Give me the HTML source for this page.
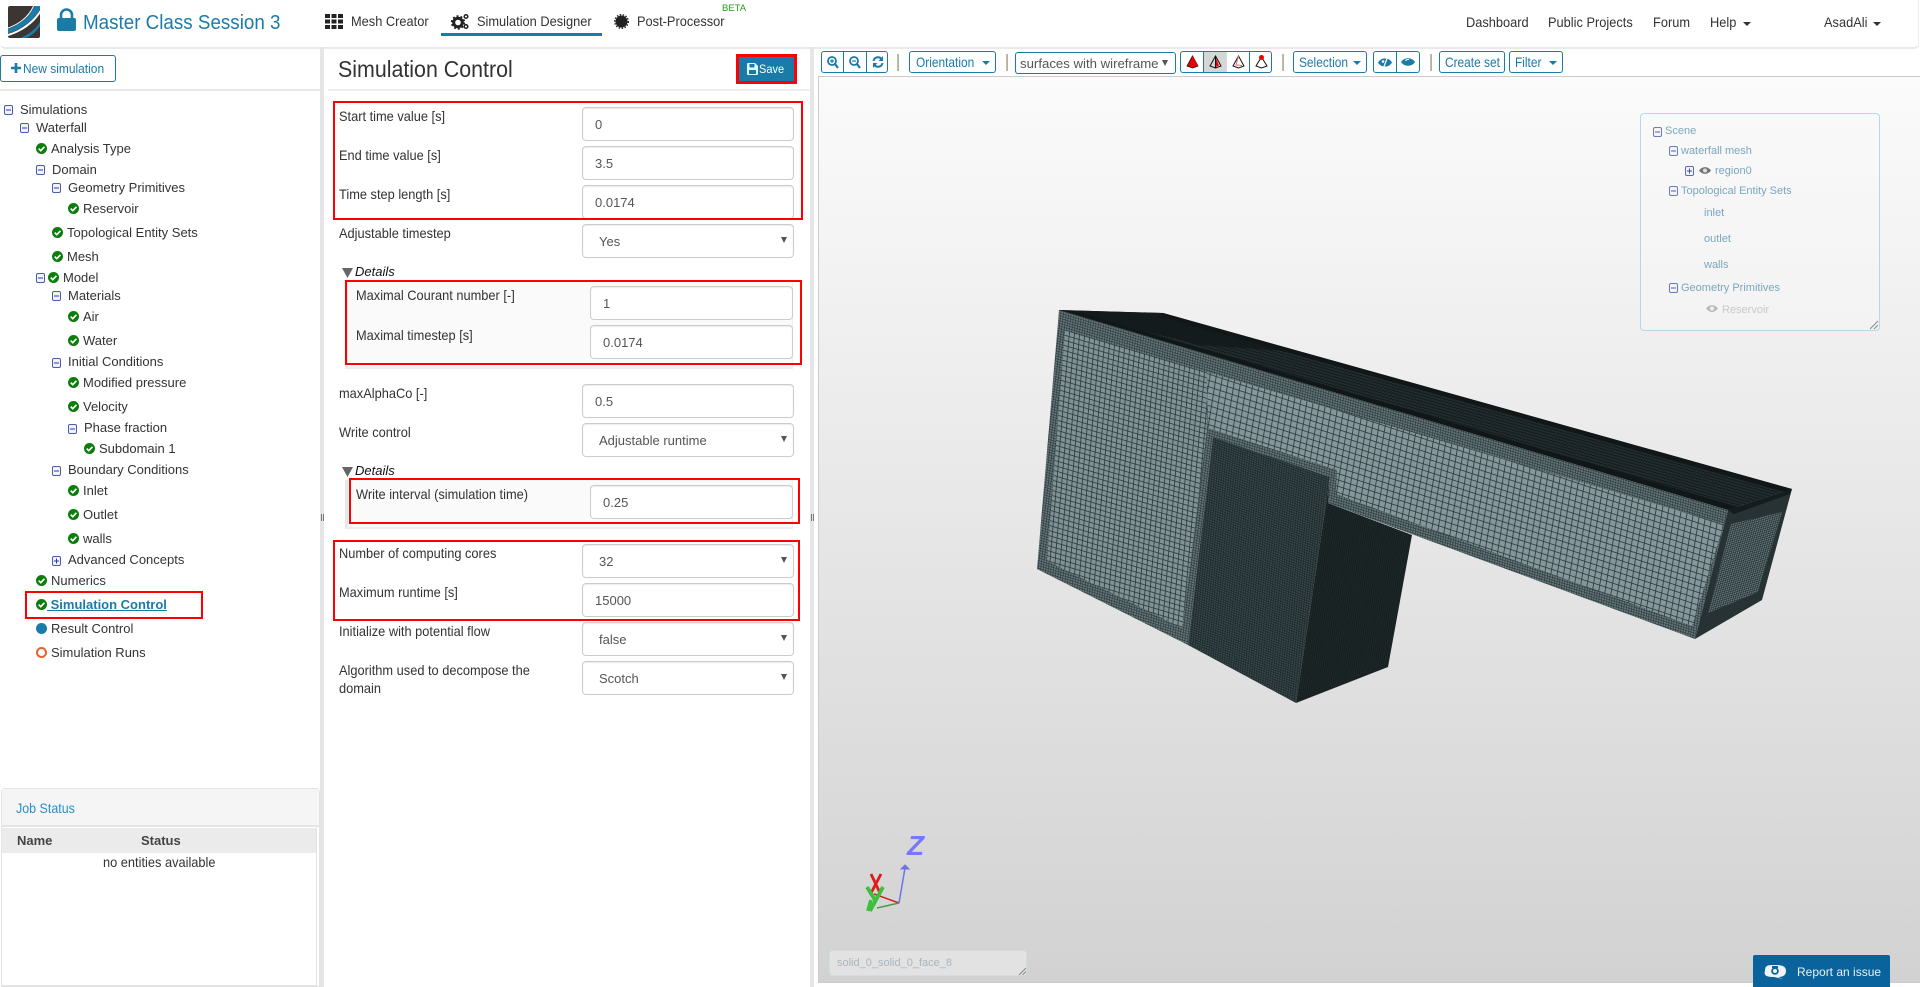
<!DOCTYPE html>
<html><head><meta charset="utf-8"><title>Simulation Control</title>
<style>
html,body{margin:0;padding:0;background:#fff}
body{position:relative;width:1920px;height:987px;overflow:hidden;font-family:"Liberation Sans",sans-serif;color:#333}
.t,.l,.i,.x,.b,.r,.s{position:absolute}
.t{white-space:nowrap;font-size:13px;line-height:16px}
.l{white-space:nowrap;font-size:14px;line-height:16px;transform:scaleX(.915);transform-origin:0 50%}
.i{overflow:visible}
.x{box-sizing:border-box;height:34px;left:582px;width:212px;border:1px solid #ccc;border-radius:4px;background:#fff;box-shadow:inset 0 1px 1px rgba(0,0,0,.075);color:#555;font-size:13px;line-height:33px;padding-left:12px}
.x.d{left:590px;width:203px}
.x.g{padding-left:16px}
.x.g:after{content:"";position:absolute;right:6px;top:12px;width:0;height:0;border-left:3px solid transparent;border-right:3px solid transparent;border-top:6px solid #555}
.r{box-sizing:border-box;border:2px solid #f00;z-index:5}
.b{box-sizing:border-box;height:22px;top:51px;border:1px solid #1a7ba8;border-radius:3px;background:#fff;color:#1a7ba8}
.b .l{top:2px;font-size:14px;transform:scaleX(.85)}
.s{width:2px;height:17px;top:54px;background:linear-gradient(90deg,#dcb68a 50%,#9db6c6 50%)}
.dv{position:absolute;top:0;bottom:0;width:1px;background:#1a7ba8}
.car{position:absolute;width:0;height:0;border-left:4px solid transparent;border-right:4px solid transparent;border-top:4px solid #1a7ba8}
.sc{font-size:11px;color:#7ba6bd}
</style></head><body>
<svg width="0" height="0" style="position:absolute"><defs>
<symbol id="c" viewBox="0 0 11 11"><circle cx="5.5" cy="5.5" r="5.5" fill="#0a7d0a"/><path d="M2.7 5.6 4.8 7.7 8.4 3.8" stroke="#fff" stroke-width="1.7" fill="none"/></symbol>
<symbol id="m" viewBox="0 0 9 10"><rect x=".5" y=".5" width="8" height="9" rx="1.5" fill="#f3f4fb" stroke="#4a5cb0"/><path d="M2 5H7" stroke="#2a3aa8" stroke-width="1"/></symbol>
<symbol id="p" viewBox="0 0 9 10"><rect x=".5" y=".5" width="8" height="9" rx="1.5" fill="#f3f4fb" stroke="#4a5cb0"/><path d="M2 5H7M4.5 2.5V7.5" stroke="#2a3aa8" stroke-width="1"/></symbol>
</defs></svg>

<!-- header -->
<div style="position:absolute;left:0;top:0;width:1918px;height:47px;border-bottom:2px solid #e9e9e9;border-right:1px solid #eee;border-radius:0 0 5px 5px;box-sizing:content-box"></div>
<svg class="i" style="left:8px;top:6px" width="32" height="32" viewBox="0 0 32 32"><rect width="32" height="32" rx="2" fill="#3b3632"/><path d="M0 21.500C12 17.500 21 9 25 0H26C22 10 12 18.500 0 22.500Z" fill="#fff"/><path d="M0 23C12 19 22 10 26.500 0H32V3C26 14 14 23 0 27.500Z" fill="#1b7cab"/><path d="M0 28C14 24 26 14 32 4V7.500C26 17 14 26 0 30Z" fill="#fff"/><path d="M12 32C20 29 27 24 32 16V20C28 26 23 30 18 32Z" fill="#1b7cab"/></svg>
<svg class="i" style="left:57px;top:9px" width="19" height="22" viewBox="0 0 19 22"><path d="M4 10V6a5.500 5.500 0 0 1 11 0V10" fill="none" stroke="#1a7ba8" stroke-width="2.600"/><rect y="9" width="19" height="13" rx="2" fill="#1a7ba8"/></svg>
<div class="l" style="left:83px;top:14px;font-size:20px;color:#1a7ba8;line-height:18px;transform:scaleX(.94)">Master Class Session 3</div>

<svg class="i" style="left:325px;top:14px" width="18" height="15" viewBox="0 0 18 15" fill="#222"><path d="M0 0h5v4H0zM6.500 0h5v4h-5zM13 0h5v4h-5zM0 5.500h5v4H0zM6.500 5.500h5v4h-5zM13 5.500h5v4h-5zM0 11h5v4H0zM6.500 11h5v4h-5zM13 11h5v4h-5z"/></svg>
<div class="l" style="left:351px;top:13px">Mesh Creator</div>
<svg class="i" style="left:451px;top:13px" width="19" height="17" viewBox="0 0 19 17"><circle cx="7" cy="9.500" r="4.300" fill="none" stroke="#222" stroke-width="3"/><circle cx="7" cy="9.500" r="6.300" fill="none" stroke="#222" stroke-width="1.800" stroke-dasharray="2 2"/><circle cx="15" cy="3.500" r="1.800" fill="none" stroke="#222" stroke-width="1.500"/><circle cx="15" cy="13.500" r="1.800" fill="none" stroke="#222" stroke-width="1.500"/></svg>
<div class="l" style="left:477px;top:13px">Simulation Designer</div>
<div style="position:absolute;left:441px;top:33px;width:161px;height:3px;background:#1a7ba8"></div>
<svg class="i" style="left:614px;top:14px" width="15" height="15" viewBox="0 0 15 15"><circle cx="7.500" cy="7.500" r="6" fill="#222"/><circle cx="7.500" cy="7.500" r="6.800" fill="none" stroke="#222" stroke-width="1.400" stroke-dasharray="1.500 1.500"/></svg>
<div class="l" style="left:637px;top:13px">Post-Processor</div>
<div class="t" style="left:722px;top:1px;font-size:9.500px;color:#2a9a1a">BETA</div>

<div class="l" style="left:1466px;top:14px">Dashboard</div>
<div class="l" style="left:1548px;top:14px">Public Projects</div>
<div class="l" style="left:1653px;top:14px">Forum</div>
<div class="l" style="left:1710px;top:14px">Help</div>
<div class="car" style="left:1743px;top:22px;border-top-color:#333"></div>
<div class="l" style="left:1824px;top:14px">AsadAli</div>
<div class="car" style="left:1873px;top:22px;border-top-color:#333"></div>

<!-- dividers -->
<div style="position:absolute;left:320px;top:47px;width:4px;height:940px;background:#e5e5e5"></div>
<div style="position:absolute;left:810px;top:47px;width:4px;height:940px;background:#e5e5e5"></div>
<div style="position:absolute;left:321px;top:514px;width:3px;height:7px;border-left:1px solid #777;border-right:1px solid #777;box-sizing:border-box"></div>
<div style="position:absolute;left:811px;top:514px;width:3px;height:7px;border-left:1px solid #777;border-right:1px solid #777;box-sizing:border-box"></div>

<!-- left panel -->
<div style="position:absolute;left:0;top:55px;width:116px;height:27px;box-sizing:border-box;border:1px solid #1a7ba8;border-radius:3px"></div>
<svg class="i" style="left:11px;top:63px" width="10" height="10" viewBox="0 0 10 10"><path d="M5 0V10M0 5H10" stroke="#1a7ba8" stroke-width="2.600"/></svg>
<div class="l" style="left:23px;top:61px;font-size:13px;color:#1a7ba8;transform:scaleX(.92)">New simulation</div>
<div style="position:absolute;left:0;top:89px;width:320px;height:2px;background:#e8e8e8"></div>

<svg class="i" style="left:4px;top:105px" width="9" height="10"><use href="#m"/></svg><div class="t" style="left:20px;top:102px">Simulations</div>
<svg class="i" style="left:20px;top:123px" width="9" height="10"><use href="#m"/></svg><div class="t" style="left:36px;top:120px">Waterfall</div>
<svg class="i" style="left:36px;top:143px" width="11" height="11"><use href="#c"/></svg><div class="t" style="left:51px;top:141px">Analysis Type</div>
<svg class="i" style="left:36px;top:165px" width="9" height="10"><use href="#m"/></svg><div class="t" style="left:52px;top:162px">Domain</div>
<svg class="i" style="left:52px;top:183px" width="9" height="10"><use href="#m"/></svg><div class="t" style="left:68px;top:180px">Geometry Primitives</div>
<svg class="i" style="left:68px;top:203px" width="11" height="11"><use href="#c"/></svg><div class="t" style="left:83px;top:201px">Reservoir</div>
<svg class="i" style="left:52px;top:227px" width="11" height="11"><use href="#c"/></svg><div class="t" style="left:67px;top:225px">Topological Entity Sets</div>
<svg class="i" style="left:52px;top:251px" width="11" height="11"><use href="#c"/></svg><div class="t" style="left:67px;top:249px">Mesh</div>
<svg class="i" style="left:36px;top:273px" width="9" height="10"><use href="#m"/></svg><svg class="i" style="left:48px;top:272px" width="11" height="11"><use href="#c"/></svg><div class="t" style="left:63px;top:270px">Model</div>
<svg class="i" style="left:52px;top:291px" width="9" height="10"><use href="#m"/></svg><div class="t" style="left:68px;top:288px">Materials</div>
<svg class="i" style="left:68px;top:311px" width="11" height="11"><use href="#c"/></svg><div class="t" style="left:83px;top:309px">Air</div>
<svg class="i" style="left:68px;top:335px" width="11" height="11"><use href="#c"/></svg><div class="t" style="left:83px;top:333px">Water</div>
<svg class="i" style="left:52px;top:358px" width="9" height="10"><use href="#m"/></svg><div class="t" style="left:68px;top:354px">Initial Conditions</div>
<svg class="i" style="left:68px;top:377px" width="11" height="11"><use href="#c"/></svg><div class="t" style="left:83px;top:375px">Modified pressure</div>
<svg class="i" style="left:68px;top:401px" width="11" height="11"><use href="#c"/></svg><div class="t" style="left:83px;top:399px">Velocity</div>
<svg class="i" style="left:68px;top:424px" width="9" height="10"><use href="#m"/></svg><div class="t" style="left:84px;top:420px">Phase fraction</div>
<svg class="i" style="left:84px;top:443px" width="11" height="11"><use href="#c"/></svg><div class="t" style="left:99px;top:441px">Subdomain 1</div>
<svg class="i" style="left:52px;top:466px" width="9" height="10"><use href="#m"/></svg><div class="t" style="left:68px;top:462px">Boundary Conditions</div>
<svg class="i" style="left:68px;top:485px" width="11" height="11"><use href="#c"/></svg><div class="t" style="left:83px;top:483px">Inlet</div>
<svg class="i" style="left:68px;top:509px" width="11" height="11"><use href="#c"/></svg><div class="t" style="left:83px;top:507px">Outlet</div>
<svg class="i" style="left:68px;top:533px" width="11" height="11"><use href="#c"/></svg><div class="t" style="left:83px;top:531px">walls</div>
<svg class="i" style="left:52px;top:556px" width="9" height="10"><use href="#p"/></svg><div class="t" style="left:68px;top:552px">Advanced Concepts</div>
<svg class="i" style="left:36px;top:575px" width="11" height="11"><use href="#c"/></svg><div class="t" style="left:51px;top:573px">Numerics</div>
<svg class="i" style="left:36px;top:599px" width="11" height="11"><use href="#c"/></svg><div class="t" style="left:47px;top:597px;color:#1a7ba8;font-weight:bold;text-decoration:underline;white-space:pre"> Simulation Control</div>
<div class="r" style="left:25px;top:591px;width:178px;height:28px"></div>
<svg class="i" style="left:36px;top:623px" width="11" height="11"><circle cx="5.500" cy="5.500" r="5.500" fill="#1a7ba8"/></svg><div class="t" style="left:51px;top:621px">Result Control</div>
<svg class="i" style="left:36px;top:647px" width="11" height="11"><circle cx="5.500" cy="5.500" r="4.500" fill="#fff" stroke="#e8632a" stroke-width="2"/></svg><div class="t" style="left:51px;top:645px">Simulation Runs</div>

<!-- job status -->
<div style="position:absolute;left:1px;top:788px;width:319px;height:199px;box-sizing:border-box;border:1px solid #e3e3e3;border-radius:4px 4px 0 0;background:#fff"></div>
<div style="position:absolute;left:2px;top:789px;width:317px;height:38px;background:#f5f5f5;border-bottom:2px solid #e5e5e5;box-sizing:border-box"></div>
<div class="l" style="left:16px;top:800px;color:#2a8fc7;transform:scaleX(.89)">Job Status</div>
<div style="position:absolute;left:2px;top:828px;width:315px;height:25px;background:#ebebeb"></div>
<div style="position:absolute;left:316px;top:827px;width:1px;height:158px;background:#e3e3e3"></div>
<div style="position:absolute;left:2px;top:985px;width:315px;height:2px;background:#e3e3e3"></div>
<div class="t" style="left:17px;top:833px;font-weight:bold;color:#444">Name</div>
<div class="t" style="left:141px;top:833px;font-weight:bold;color:#444">Status</div>
<div class="l" style="left:103px;top:854px">no entities available</div>

<!-- form -->
<div class="l" style="left:338px;top:57px;font-size:23.500px;line-height:24px;transform:scaleX(.91)">Simulation Control</div>
<div style="position:absolute;left:736px;top:54px;width:61px;height:30px;box-sizing:border-box;border:3px solid #f00;background:#1a7ba8"></div>
<svg class="i" style="left:747px;top:63px" width="11" height="12" viewBox="0 0 11 12"><path d="M0 1Q0 0 1 0H8L11 3V11Q11 12 10 12H1Q0 12 0 11Z" fill="#dff"/><rect x="2.500" y="1" width="5" height="3.500" fill="#1a7ba8"/><rect x="2" y="7" width="7" height="4" fill="#1a7ba8"/></svg>
<div class="l" style="left:759px;top:61px;font-size:12px;color:#fff;transform:scaleX(.92)">Save</div>
<div style="position:absolute;left:328px;top:89px;width:482px;height:2px;background:#ededed"></div>

<div class="l" style="left:339px;top:108px">Start time value [s]</div>
<div class="x" style="top:107px">0</div>
<div class="l" style="left:339px;top:147px">End time value [s]</div>
<div class="x" style="top:146px">3.5</div>
<div class="l" style="left:339px;top:186px">Time step length [s]</div>
<div class="x" style="top:185px">0.0174</div>
<div class="r" style="left:333px;top:101px;width:470px;height:119px"></div>

<div class="l" style="left:339px;top:225px">Adjustable timestep</div>
<div class="x g" style="top:224px">Yes</div>

<svg class="i" style="left:342px;top:268px" width="11" height="10"><path d="M0 0H11L5.500 10Z" fill="#666"/></svg>
<div class="t" style="left:355px;top:264px;font-style:italic;color:#111">Details</div>
<div style="position:absolute;left:345px;top:280px;width:448px;height:89px;box-sizing:border-box;background:#fafafa;border-left:3px solid #e8e8e8;border-bottom:2px solid #eee;border-right:1px solid #f0f0f0"></div>
<div class="l" style="left:356px;top:287px">Maximal Courant number [-]</div>
<div class="x d" style="top:286px">1</div>
<div class="l" style="left:356px;top:327px">Maximal timestep [s]</div>
<div class="x d" style="top:325px">0.0174</div>
<div class="r" style="left:345px;top:280px;width:457px;height:85px"></div>

<div class="l" style="left:339px;top:385px">maxAlphaCo [-]</div>
<div class="x" style="top:384px">0.5</div>
<div class="l" style="left:339px;top:424px">Write control</div>
<div class="x g" style="top:423px">Adjustable runtime</div>

<svg class="i" style="left:342px;top:467px" width="11" height="10"><path d="M0 0H11L5.500 10Z" fill="#666"/></svg>
<div class="t" style="left:355px;top:463px;font-style:italic;color:#111">Details</div>
<div style="position:absolute;left:345px;top:480px;width:448px;height:49px;box-sizing:border-box;background:#fafafa;border-left:3px solid #e8e8e8;border-bottom:2px solid #eee;border-right:1px solid #f0f0f0"></div>
<div class="l" style="left:356px;top:486px">Write interval (simulation time)</div>
<div class="x d" style="top:485px">0.25</div>
<div class="r" style="left:349px;top:478px;width:451px;height:46px"></div>

<div class="l" style="left:339px;top:545px">Number of computing cores</div>
<div class="x g" style="top:544px">32</div>
<div class="l" style="left:339px;top:584px">Maximum runtime [s]</div>
<div class="x" style="top:583px">15000</div>
<div class="r" style="left:333px;top:540px;width:467px;height:81px"></div>
<div class="l" style="left:339px;top:623px">Initialize with potential flow</div>
<div class="x g" style="top:622px">false</div>
<div class="l" style="left:339px;top:662px">Algorithm used to decompose the</div>
<div class="l" style="left:339px;top:680px">domain</div>
<div class="x g" style="top:661px">Scotch</div>

<!-- toolbar -->
<div class="b" style="left:821px;width:67px">
 <div class="dv" style="left:21px"></div><div class="dv" style="left:44px"></div>
 <svg class="i" style="left:5px;top:4px" width="12" height="13" viewBox="0 0 12 13"><circle cx="5" cy="5" r="4" fill="none" stroke="#1a7ba8" stroke-width="1.800"/><path d="M8 8 11 12" stroke="#1a7ba8" stroke-width="2.200"/><path d="M3 5H7M5 3V7" stroke="#1a7ba8" stroke-width="1.200"/></svg>
 <svg class="i" style="left:27px;top:4px" width="12" height="13" viewBox="0 0 12 13"><circle cx="5" cy="5" r="4" fill="none" stroke="#1a7ba8" stroke-width="1.800"/><path d="M8 8 11 12" stroke="#1a7ba8" stroke-width="2.200"/><path d="M3 5H7" stroke="#1a7ba8" stroke-width="1.200"/></svg>
 <svg class="i" style="left:50px;top:4px" width="12" height="12" viewBox="0 0 12 12"><path d="M1.500 5A4.500 4.500 0 0 1 9.500 3M10.500 7A4.500 4.500 0 0 1 2.500 9" fill="none" stroke="#1a7ba8" stroke-width="2"/><path d="M11 0V5H6.500ZM1 12V7H5.500Z" fill="#1a7ba8"/></svg>
</div>
<div class="s" style="left:897px"></div>
<div class="b" style="left:909px;width:87px"><div class="l" style="left:6px">Orientation</div><div class="car" style="left:72px;top:9px"></div></div>
<div class="s" style="left:1006px"></div>
<div class="b" style="left:1015px;width:161px;top:52px"><div class="t" style="left:4px;top:3px;font-size:13.200px;color:#555">surfaces with wireframe</div><div style="position:absolute;left:146px;top:7px;width:0;height:0;border-left:3px solid transparent;border-right:3px solid transparent;border-top:6px solid #555"></div></div>
<div class="b" style="left:1180px;width:92px;overflow:hidden">
 <div style="position:absolute;left:23px;top:0;width:23px;height:20px;background:#d6d6d6"></div>
 <div class="dv" style="left:22px"></div><div class="dv" style="left:45px;background:#d0e0e8"></div><div class="dv" style="left:68px"></div>
 <svg class="i" style="left:5px;top:4px" width="13" height="13" viewBox="0 0 13 13"><path d="M6.500 0 12 10 6.500 12 1 10Z" fill="#e00" stroke="#111" stroke-width=".8"/><path d="M6.500 0 4 9 12 10" fill="#e00"/></svg>
 <svg class="i" style="left:28px;top:4px" width="13" height="13" viewBox="0 0 13 13"><path d="M6.500 0 12 10 6.500 12 1 10Z" fill="none" stroke="#111"/><path d="M6.500 1 10 9.500 6.500 11Z" fill="#e00"/><path d="M6.500 0V12" stroke="#111"/></svg>
 <svg class="i" style="left:51px;top:4px" width="13" height="13" viewBox="0 0 13 13"><path d="M6.500 0 12 10 6.500 12 1 10Z" fill="none" stroke="#111"/><path d="M6.500 0 4 9 10 9.500" fill="none" stroke="#e66"/></svg>
 <svg class="i" style="left:74px;top:3px" width="13" height="14" viewBox="0 0 13 14"><path d="M6.500 2 12 11 6.500 13 1 11Z" fill="none" stroke="#111"/><circle cx="6.500" cy="2.500" r="2.500" fill="#e00"/></svg>
</div>
<div class="s" style="left:1282px"></div>
<div class="b" style="left:1293px;width:74px"><div class="l" style="left:5px">Selection</div><div class="car" style="left:59px;top:9px"></div></div>
<div class="b" style="left:1373px;width:47px">
 <div class="dv" style="left:22px"></div>
 <svg class="i" style="left:4px;top:5px" width="14" height="11" viewBox="0 0 14 11"><path d="M0 5.500C3 0 11 0 14 5.500 11 11 3 11 0 5.500Z" fill="#1a7ba8"/><path d="M9.500 0 5.500 11" stroke="#fff" stroke-width="1.200"/><circle cx="5" cy="4.500" r="1.300" fill="#fff"/></svg>
 <svg class="i" style="left:27px;top:5px" width="14" height="10" viewBox="0 0 14 10"><path d="M0 5C3 0 11 0 14 5 11 10 3 10 0 5Z" fill="#1a7ba8"/><path d="M4.500 4A3 3 0 0 1 8 2.500" stroke="#fff" fill="none"/></svg>
</div>
<div class="s" style="left:1430px"></div>
<div class="b" style="left:1439px;width:66px"><div class="l" style="left:5px">Create set</div></div>
<div class="b" style="left:1509px;width:54px"><div class="l" style="left:5px">Filter</div><div class="car" style="left:39px;top:9px"></div></div>

<!-- viewer -->
<div style="position:absolute;left:818px;top:76px;width:1102px;height:907px;box-sizing:border-box;border-top:1px solid #ccc;border-left:1px solid #ccc;background:linear-gradient(180deg,#fbfbfb 0%,#d2d2d2 100%);border-bottom:1px solid #ccc"></div>

<svg class="i" style="left:0;top:0" width="1920" height="987" viewBox="0 0 1920 987">
<defs>
<pattern id="pf" width="5" height="5" patternUnits="userSpaceOnUse" patternTransform="matrix(1 .3 -.085 1 0 0)"><rect width="5" height="5" fill="#7f9296"/><path d="M0 .4H5M.4 0V5" stroke="#2c3739" stroke-width=".8"/></pattern>
<pattern id="pb" width="6" height="6" patternUnits="userSpaceOnUse" patternTransform="matrix(1 .33 -.16 1 0 0)"><rect width="6" height="6" fill="#84989c"/><path d="M0 .4H6M.4 0V6" stroke="#2c3739" stroke-width=".8"/></pattern>
<pattern id="pn" width="2.500" height="2.500" patternUnits="userSpaceOnUse" patternTransform="matrix(1 .3 -.12 1 0 0)"><rect width="2.500" height="2.500" fill="#66787c"/><path d="M0 .3H2.500M.3 0V2.500" stroke="#2a3638" stroke-width=".6"/></pattern>
<pattern id="pw" width="2.300" height="2.300" patternUnits="userSpaceOnUse" patternTransform="matrix(1 .35 -.1 1 0 0)"><rect width="2.300" height="2.300" fill="#3a4a4e"/><path d="M0 .3H2.300M.3 0V2.300" stroke="#1c2627" stroke-width=".7"/></pattern>
<pattern id="ps" width="2.200" height="2.200" patternUnits="userSpaceOnUse" patternTransform="matrix(1 -.4 -.15 1 0 0)"><rect width="2.200" height="2.200" fill="#202b2c"/><path d="M0 .3H2.200M.3 0V2.200" stroke="#141b1c" stroke-width=".7"/></pattern>
<pattern id="pt" width="2.400" height="2.400" patternUnits="userSpaceOnUse" patternTransform="matrix(1 .28 -.8 1 0 0)"><rect width="2.400" height="2.400" fill="#263234"/><path d="M0 .3H2.400M.3 0V2.400" stroke="#11181a" stroke-width=".8"/></pattern>
<pattern id="pe" width="2.300" height="2.300" patternUnits="userSpaceOnUse" patternTransform="matrix(1 -.3 -.28 1 0 0)"><rect width="2.300" height="2.300" fill="#6a7d81"/><path d="M0 .3H2.300M.3 0V2.300" stroke="#1f2a2b" stroke-width=".7"/></pattern>
</defs>
<!-- top -->
<path d="M1059 310 1163 313 1792 489 1728 510Z" fill="url(#pt)"/>
<path d="M1059 310 1163 313 1300 352 1200 345Z" fill="#141b1c"/>
<path d="M1059 310 1728 510 1738 507 1075 311Z" fill="#111718"/>
<path d="M1163 313 1792 489 1784 492 1158 316Z" fill="#111718"/>
<!-- side of wedge -->
<path d="M1330 477 1328 503 1412 535 1388 667 1296 703Z" fill="url(#ps)"/>
<!-- face -->
<path d="M1059 310 1728 510 1695 639 1328 503 1330 477 1213 437 1188 645 1037 569Z" fill="url(#pn)"/>
<path d="M1065 330 1207 372 1207 430 1182 628 1047 561Z" fill="url(#pf)"/>
<path d="M1207 372 1724 524 1692 626 1336 494 1337 470 1208 428Z" fill="url(#pb)"/>
<!-- wedge front -->
<path d="M1213 437 1330 477 1296 703 1188 645Z" fill="url(#pw)"/>
<!-- end -->
<path d="M1728 510 1792 489 1762 600 1695 639Z" fill="#263234"/>
<path d="M1731 524 1782 512 1758 592 1708 613Z" fill="url(#pe)"/>
<path d="M1728 510 1792 489 1790 494 1734 514Z" fill="#141c1d"/>
<!-- axes -->
<path d="M899 903 905 868" stroke="#7272e8" stroke-width="1.500" fill="none"/><path d="M901 869 905 865 909 869Z" fill="#7272e8" stroke="#7272e8"/>
<path d="M899 903 874 894" stroke="#c22" stroke-width="1.500"/>
<path d="M899 903 877 908" stroke="#4a9a4a" stroke-width="1.500"/>
<path d="M871 874 880 893M881 874 870 895" stroke="#e01a1a" stroke-width="2.800" fill="none"/>
<path d="M867 887 875 900M883 887 870 911M871 900 868 911" stroke="#3fbf3f" stroke-width="3.800" fill="none"/>
<text x="907" y="855" font-family="Liberation Sans" font-size="28" font-weight="bold" font-style="italic" fill="#7777ff">Z</text>
</svg>

<!-- scene panel -->
<div style="position:absolute;left:1640px;top:113px;width:240px;height:218px;box-sizing:border-box;border:1px solid #b5d8e6;border-radius:4px;background:rgba(250,250,250,.35)"></div>
<svg class="i" style="left:1653px;top:127px;opacity:.8" width="9" height="10"><use href="#m"/></svg><div class="t sc" style="left:1665px;top:123px">Scene</div>
<svg class="i" style="left:1669px;top:146px;opacity:.8" width="9" height="10"><use href="#m"/></svg><div class="t sc" style="left:1681px;top:143px">waterfall mesh</div>
<svg class="i" style="left:1685px;top:166px;opacity:.9" width="9" height="10"><use href="#p"/></svg>
<svg class="i" style="left:1699px;top:166px" width="12" height="9" viewBox="0 0 12 9"><path d="M0 4.500C3 0 9 0 12 4.500 9 9 3 9 0 4.500Z" fill="#777"/><circle cx="6" cy="4.500" r="2" fill="#ddd"/></svg>
<div class="t sc" style="left:1715px;top:163px">region0</div>
<svg class="i" style="left:1669px;top:186px;opacity:.8" width="9" height="10"><use href="#m"/></svg><div class="t sc" style="left:1681px;top:183px">Topological Entity Sets</div>
<div class="t sc" style="left:1704px;top:205px">inlet</div>
<div class="t sc" style="left:1704px;top:231px">outlet</div>
<div class="t sc" style="left:1704px;top:257px">walls</div>
<svg class="i" style="left:1669px;top:283px;opacity:.8" width="9" height="10"><use href="#m"/></svg><div class="t sc" style="left:1681px;top:280px">Geometry Primitives</div>
<svg class="i" style="left:1706px;top:304px" width="12" height="9" viewBox="0 0 12 9"><path d="M0 4.500C3 0 9 0 12 4.500 9 9 3 9 0 4.500Z" fill="#bbb"/><circle cx="6" cy="4.500" r="2" fill="#eee"/></svg>
<div class="t sc" style="left:1722px;top:302px;color:#c9c9c9">Reservoir</div>
<svg class="i" style="left:1870px;top:321px" width="8" height="8"><path d="M0 8 8 0M4 8 8 4" stroke="#888"/></svg>

<!-- bottom name box -->
<div style="position:absolute;left:829px;top:950px;width:198px;height:26px;box-sizing:border-box;border:1px solid #d0dee4;border-radius:4px;background:#e2e2e2"></div>
<div class="t" style="left:837px;top:955px;font-size:11px;color:#a9b6bd">solid_0_solid_0_face_8</div>
<svg class="i" style="left:1019px;top:968px" width="7" height="7"><path d="M0 7 7 0M3.500 7 7 3.500" stroke="#888"/></svg>

<!-- report -->
<div style="position:absolute;left:1753px;top:955px;width:137px;height:32px;background:#0a639c;border-radius:2px 2px 0 0"></div>
<svg class="i" style="left:1763px;top:964px" width="25" height="16" viewBox="0 0 25 16"><path d="M2 7C2 1 5 1 12 1S23 2 23 7 19 13 15 13L20 15 11 13C5 13 0 12 2 7Z" fill="#eef4f8"/><circle cx="12" cy="7" r="3.800" fill="#0a639c"/><circle cx="12" cy="7" r="2" fill="#eef4f8"/><rect x="9" y="2" width="6" height="2" fill="#0a639c"/></svg>
<div class="t" style="left:1797px;top:964px;font-size:12px;color:#e8f0f5">Report an issue</div>
</body></html>
